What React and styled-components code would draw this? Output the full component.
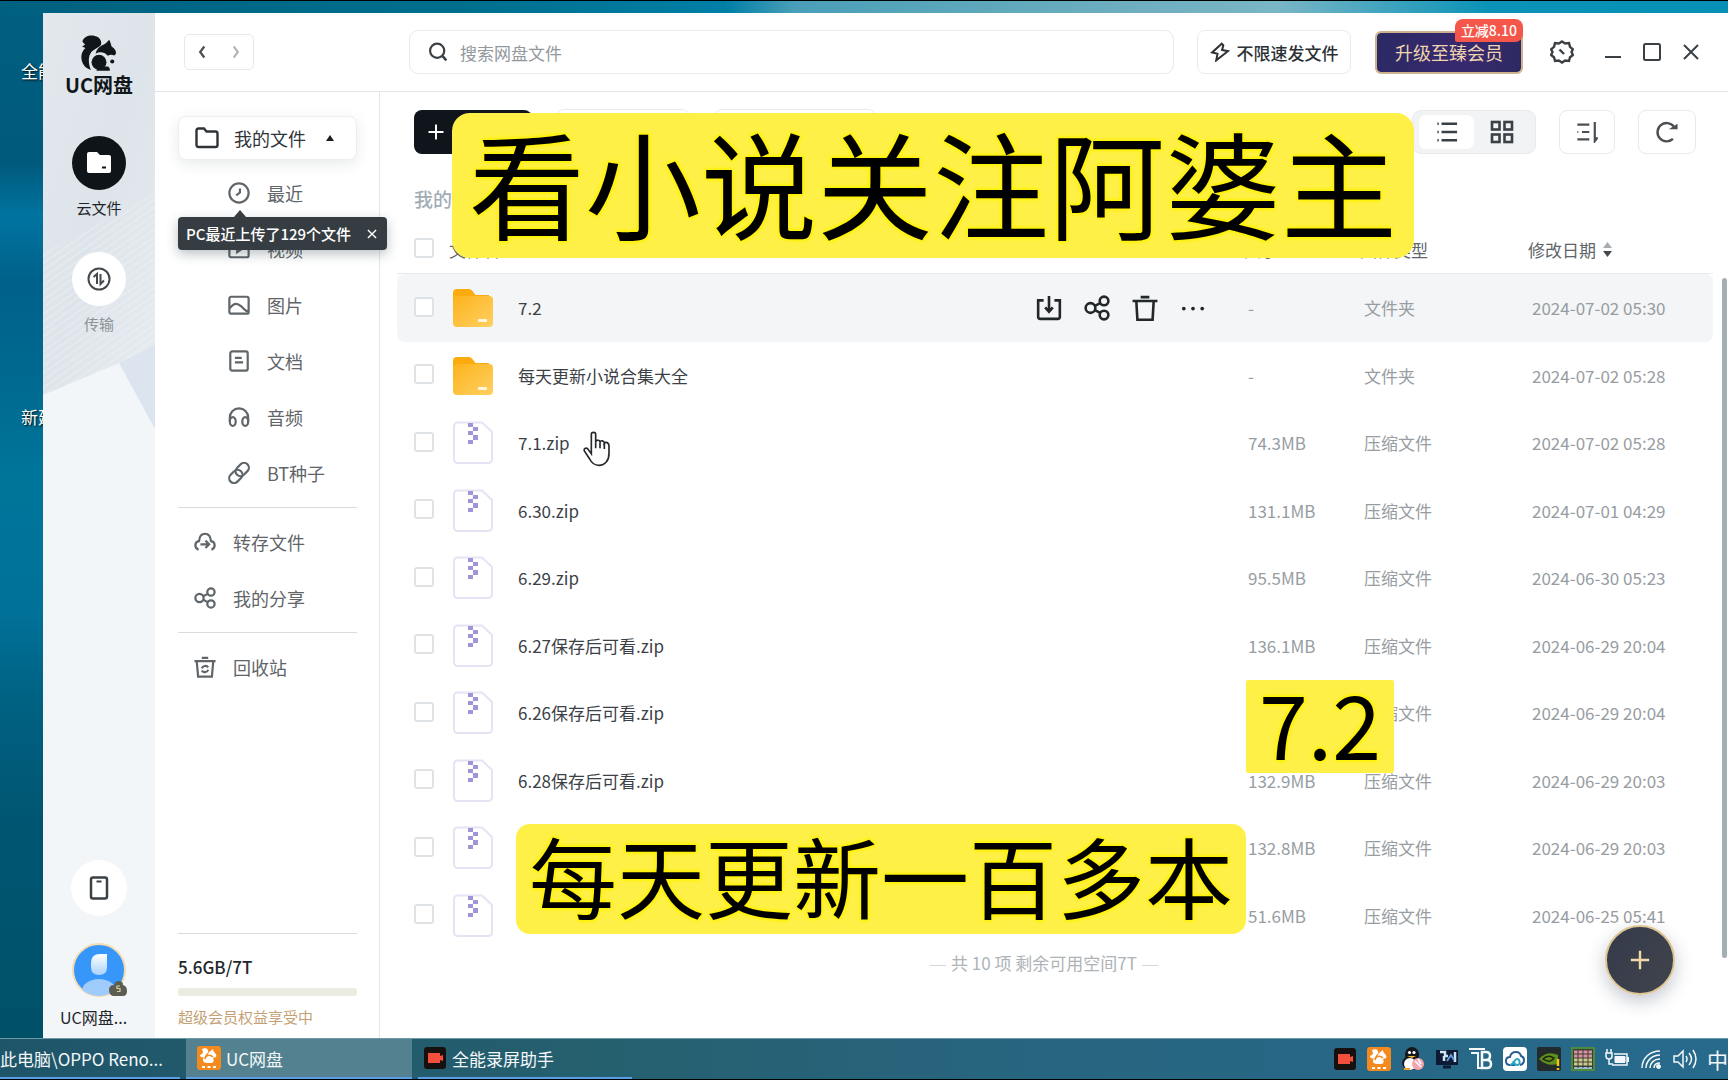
import { useState } from "react";
import styled, { createGlobalStyle, css } from "styled-components";

const GlobalStyle = createGlobalStyle`
  * {
    box-sizing: border-box;
  }

  body {
    margin: 0;
    font-family: "Noto Sans CJK SC", "Noto Sans", sans-serif;
    font-size: 17px;
    color: #3b4045;
  }

  button, input {
    font: inherit;
    color: inherit;
  }

  button {
    background: none;
    border: none;
    padding: 0;
    cursor: pointer;
  }

  svg {
    display: block;
    flex: none;
  }
`;

const Desktop = styled.div`
  position: relative;
  display: flex;
  flex-direction: column;
  height: 100vh;
  overflow: hidden;
  border-top: 1px solid #000;
  border-bottom: 1px solid #000;
  background:
    linear-gradient(90deg, #00607f 0, #00708f 28%, #007fa6 42%, #4a9fb8 46%, #6fafbf 66%, #79b6c6 74%, #0b93b7 86%, #0690b5 100%)
    0 0 / 100% 14px no-repeat,
    linear-gradient(180deg, #005f80 0, #005a7c 15%, #0074a0 20%, #00618a 26%, #006a90 36%, #00759a 44%, #00729a 56%, #006080 66%, #005672 76%, #004f66 100%);
`;

const DesktopLabel = styled.span`
  position: absolute;
  left: 21px;
  top: ${(p) => p.$top}px;
  color: #fff;
  line-height: 24px;
  white-space: nowrap;
  text-shadow: 1px 1px 2px #000;
`;

const Window = styled.div`
  position: relative;
  display: flex;
  flex: 1;
  min-height: 0;
  margin: 12px 0 0 43px;
  background: #fff;
`;

/* ---- left rail ---- */

const Rail = styled.nav`
  position: relative;
  display: flex;
  flex-direction: column;
  align-items: center;
  flex: none;
  width: 112px;
  padding: 22px 0 11px;
  background: #f2f6f9;
`;

const RailArt = styled.svg`
  position: absolute;
  inset: 0 0 auto;
  width: 100%;
`;

const Brand = styled.div`
  position: relative;
  margin-bottom: 38px;
  font-size: 20px;
  font-weight: 700;
  line-height: 27px;
  color: #10161a;
`;

const Logo = styled.svg`
  position: relative;
  width: 36px;
  height: 36px;
  fill: #10161a;
`;

const RailButton = styled.button`
  position: relative;
  display: flex;
  flex-direction: column;
  align-items: center;
  gap: 8px;
  margin-bottom: 34px;
  font-size: 15px;
  line-height: 20px;
  color: ${(p) => (p.$active ? "#1f2428" : "#8b9298")};
`;

const Round = styled.span`
  display: grid;
  place-items: center;
  width: 54px;
  height: 54px;
  border-radius: 50%;
  color: ${(p) => (p.$active ? "#fff" : "#44494d")};
  background: ${(p) => (p.$active ? "#0e1418" : "#fff")};
`;

const PhoneButton = styled.button`
  display: grid;
  place-items: center;
  width: 56px;
  height: 56px;
  margin: auto 0 26px;
  border-radius: 50%;
  background: #fff;
`;

const Account = styled.button`
  display: flex;
  flex-direction: column;
  align-items: center;
  gap: 9px;
  font-size: 16px;
  line-height: 20px;
  color: #1f2428;
`;

const AccountName = styled.span`
  width: 78px;
  text-align: left;
  white-space: nowrap;
`;

/* ---- header ---- */

const Body = styled.div`
  display: flex;
  flex-direction: column;
  flex: 1;
  min-width: 0;
`;

const Header = styled.header`
  display: flex;
  align-items: center;
  flex: none;
  height: 79px;
  padding: 0 25px 0 29px;
  border-bottom: 1px solid #e4e7e9;
`;

const History = styled.div`
  display: flex;
  flex: none;
  width: 70px;
  height: 36px;
  margin-right: 155px;
  border: 1px solid #e6e8ea;
  border-radius: 5px;

  button {
    display: grid;
    place-items: center;
    flex: 1;
    color: #4a4f53;
  }

  button:disabled {
    color: #b4b8bb;
  }
`;

const SearchBox = styled.label`
  display: flex;
  align-items: center;
  gap: 12px;
  flex: 1;
  height: 44px;
  padding: 0 18px;
  border: 1px solid #e8eaec;
  border-radius: 9px;

  input {
    flex: 1;
    min-width: 0;
    padding: 0;
    border: none;
    outline: none;
    background: none;
  }

  input::placeholder {
    color: #92989d;
  }
`;

const FastButton = styled.button`
  display: flex;
  align-items: center;
  justify-content: center;
  gap: 7px;
  flex: none;
  width: 154px;
  height: 44px;
  margin: 0 24px 0 23px;
  border: 1px solid #e8eaec;
  border-radius: 8px;
  font-weight: 500;
  color: #2c3135;
`;

const Upgrade = styled.button`
  position: relative;
  flex: none;
  width: 148px;
  height: 43px;
  margin-right: 27px;
  border: 2px solid #cdb28c;
  border-radius: 6px;
  background: linear-gradient(100deg, #2b2a63, #38296f 60%, #2c2a62) padding-box;
  font-size: 18px;
  color: #f0d6ae;
`;

const Discount = styled.span`
  position: absolute;
  right: -2px;
  top: -14px;
  padding: 0 6px;
  border-radius: 8px 8px 8px 2px;
  background: #f4574a;
  font-size: 14px;
  font-weight: 500;
  line-height: 23px;
  color: #fff;
`;

const WindowControls = styled.div`
  display: flex;
  gap: 15px;
  margin-left: 27px;
`;

/* ---- folder menu ---- */

const Columns = styled.div`
  display: flex;
  flex: 1;
  min-height: 0;
`;

const Side = styled.aside`
  display: flex;
  flex-direction: column;
  flex: none;
  width: 225px;
  padding: 24px 22px 9px 23px;
  border-right: 1px solid #e4e7e9;
`;

const SideRoot = styled.button`
  display: flex;
  align-items: center;
  gap: 15px;
  height: 44px;
  flex: none;
  margin-bottom: 5px;
  padding: 0 16px;
  border: 1px solid #eceeef;
  border-radius: 8px;
  background: #fff;
  box-shadow: 0 4px 14px rgba(30, 50, 60, 0.1);
  font-size: 18px;
  color: #2f3438;
`;

const Caret = styled.i`
  margin-left: 5px;
  border: 4px solid transparent;
  border-top: none;
  border-bottom: 6px solid #1a1e21;
`;

const SideItem = styled.button`
  position: relative;
  display: flex;
  align-items: center;
  gap: 17px;
  flex: none;
  height: 56px;
  padding-left: ${(p) => (p.$nested ? 50 : 16)}px;
  font-size: 18px;
  color: #5f6569;
`;

const Rule = styled.hr`
  flex: none;
  width: 100%;
  height: 1px;
  margin: 6px 0;
  border: none;
  background: #d9dcde;
`;

const Anchor = styled.div`
  position: relative;
  z-index: 2;
`;

const Tip = styled.div`
  position: absolute;
  left: 0;
  top: -4px;
  display: flex;
  align-items: center;
  gap: 14px;
  height: 33px;
  padding: 0 8px;
  border-radius: 4px;
  background: #363d42;
  box-shadow: 0 4px 12px rgba(30, 50, 60, 0.3);
  font-size: 15px;
  font-weight: 500;
  white-space: nowrap;
  color: #fff;

  &::before {
    content: "";
    position: absolute;
    left: 56px;
    top: -7px;
    border: 6px solid transparent;
    border-top: none;
    border-bottom: 7px solid #363d42;
  }
`;

const Quota = styled.div`
  margin-top: auto;
  font-size: 15px;
  line-height: 24px;
  color: #c3a174;

  strong {
    display: block;
    margin-top: 21px;
    font-size: 17px;
    font-weight: 500;
    color: #22272b;
  }

  ${Rule} {
    margin: 0;
  }
`;

const QuotaBar = styled.div`
  height: 8px;
  margin: 9px 0;
  border-radius: 3px;
  background: #ecebe1;
`;

/* ---- file list ---- */

const Main = styled.main`
  position: relative;
  flex: 1;
  min-width: 0;
  padding: 18px 15px 0 17px;
`;

const Toolbar = styled.div`
  display: flex;
  align-items: center;
  height: 44px;
  padding: 0 17px;
`;

const Button = styled.button`
  height: 46px;
  flex: none;
  width: ${(p) => p.$width}px;
  margin-left: 24px;
  border: 1px solid #e8eaec;
  border-radius: 8px;
  background: #fff;
`;

const NewButton = styled(Button)`
  display: flex;
  align-items: center;
  height: 44px;
  margin: 0;
  padding-left: 13px;
  border: none;
  background: #0f151a;
  color: #fff;
`;

const IconButton = styled(Button)`
  display: grid;
  place-items: center;
  height: 44px;
  margin-left: 23px;
  color: #4a4f53;
`;

const ViewSwitch = styled.div`
  display: flex;
  height: 44px;
  width: 124px;
  margin-left: auto;
  padding: 4px 6px;
  border: 1px solid #e8eaec;
  border-radius: 9px;
  background: #f1f3f4;

  button {
    display: grid;
    place-items: center;
    flex: 1;
    border-radius: 7px;
  }

  button[aria-pressed="true"] {
    background: #fff;
  }
`;

const Breadcrumb = styled.div`
  padding: 31px 17px 15px;
  font-size: 19px;
  font-weight: 500;
  line-height: 28px;
  color: #a3adb6;
`;

const FileTable = styled.table`
  width: 100%;
  table-layout: fixed;
  border-collapse: separate;
  border-spacing: 0;
  line-height: 24px;

  th, td {
    padding: 0;
    text-align: left;
    vertical-align: middle;
    font-weight: 400;
    white-space: nowrap;
  }

  th {
    height: 46px;
    padding-bottom: 2px;
    border-bottom: 1px solid #e6e9eb;
    color: #5f666b;
  }

  td {
    color: #979da2;
  }
`;

const Col = styled.col`
  width: ${(p) => p.$width}px;
`;

const Row = styled.tr`
  height: 68px;

  &:nth-child(even) {
    height: 67px;
  }

  ${(p) =>
    p.$hover &&
    css`
      td {
        background: #f3f5f6;
      }

      td:first-child {
        border-radius: 8px 0 0 8px;
      }

      td:last-child {
        border-radius: 0 8px 8px 0;
      }
    `}
`;

const Check = styled.input.attrs({ type: "checkbox" })`
  appearance: none;
  display: block;
  width: 20px;
  height: 20px;
  margin: 0 0 3px 17px;
  border: 2px solid #e0e3e5;
  border-radius: 3px;
  background: #fff;

  &:checked {
    background: #0f151a;
  }
`;

const NameCell = styled.div`
  display: flex;
  align-items: center;
  gap: 25px;
  color: #3b4146;
`;

const Actions = styled.div`
  display: flex;
  gap: 22px;
  margin-left: auto;
  padding-right: 42px;
  color: #22272a;
`;

const SortHeader = styled.button`
  display: flex;
  align-items: center;
  gap: 7px;
`;

const HeadText = styled.div`
  margin-left: -4px;
`;

const Summary = styled.p`
  margin: 1px 0 0;
  padding-right: 22px;
  text-align: center;
  line-height: 26px;
  color: #adb3b7;

  &::before,
  &::after {
    content: "";
    display: inline-block;
    width: 16px;
    height: 1px;
    margin: 0 5px;
    vertical-align: middle;
    background: #d3d7d9;
  }
`;

const Scrollbar = styled.div`
  position: absolute;
  right: 1px;
  top: 186px;
  bottom: 80px;
  width: 5px;
  border-radius: 3px;
  background: #a5afb6;
`;

const Fab = styled.button`
  position: absolute;
  right: 53px;
  bottom: 43px;
  display: grid;
  place-items: center;
  width: 70px;
  height: 70px;
  border: 2px solid #dcc593;
  border-radius: 50%;
  background: linear-gradient(120deg, #343a4a, #40444d);
  box-shadow: 0 6px 18px rgba(40, 50, 80, 0.28);
  color: #f3d9a8;
`;

/* ---- taskbar ---- */

const Taskbar = styled.footer`
  display: flex;
  align-items: stretch;
  flex: none;
  height: 41px;
  gap: 6px;
  border-top: 1px solid #6c9aa6;
  background: linear-gradient(90deg, #1f5569, #25606f 35%, #286580 60%, #276a8c);
`;

const Task = styled.button`
  display: flex;
  align-items: center;
  gap: 5px;
  width: ${(p) => p.$width}px;
  padding-left: ${(p) => p.$inset}px;
  border-bottom: 2px solid #5b9ee6;
  background: ${(p) => (p.$active ? "#53818f" : "none")};
  white-space: nowrap;
  color: #f4f8fa;
`;

const Tray = styled.div`
  display: flex;
  align-items: center;
  gap: 10px;
  margin-left: auto;
  color: #f4f8fa;
`;

const InputMethod = styled.button`
  width: 21px;
  font-size: 21px;
  line-height: 30px;
`;

/* ---- captions over the recording ---- */

const Caption = styled.div`
  position: absolute;
  left: ${(p) => p.$left}px;
  top: ${(p) => p.$top}px;
  z-index: 3;
  padding: 0 ${(p) => p.$pad}px 10px;
  border-radius: ${(p) => p.$radius}px;
  background: #fff048;
  font-size: ${(p) => p.$size}px;
  line-height: ${(p) => p.$line}px;
  white-space: nowrap;
  color: #000;
  text-shadow: 0 0 3px #fff200, 0 0 3px #fff200, 0 0 4px #fff200, 0 0 5px #fff200;
`;

const Pointer = styled.svg`
  position: absolute;
  left: 583px;
  top: 430px;
  z-index: 2;
`;

const PATHS = {
  back: <path d="M14.5 6 10 12l4.5 6" strokeWidth="2.4" />,
  forward: <path d="m9.5 6 4.5 6-4.5 6" strokeWidth="2.4" />,
  search: (
    <>
      <circle cx="11" cy="10.5" r="8.5" />
      <path d="m17.5 17 4.5 5" strokeWidth="3" />
    </>
  ),
  bolt: <path d="M14 2 2.500 12.500l6.500 1.500-1.500 8L21.500 11l-7-1.500L16 4z" />,
  gear: (
    <>
      <path d="m12 1.500 3.200 2 3.800-.4 1 3.700 2.900 2.500L21.500 12l1.400 3-2.900 2.300-1 3.700-3.800-.4-3.200 2-3.200-2-3.800.4-1-3.700L1.100 15l1.400-3-1.400-2.700L4 6.800l1-3.700 3.800.4z" />
      <path d="m9.500 9.500 4.500 4.500" />
    </>
  ),
  minimize: <path d="M4 17h16" />,
  maximize: <rect x="4" y="4" width="16" height="16" rx="1.500" />,
  close: <path d="m5 5 14 14M19 5 5 19" />,
  folder: <path d="M1.500 19V4.500Q1.500 2.500 3.500 2.500H9l2.500 3h9q2 0 2 2V19q0 2-2 2h-17q-2 0-2-2z" />,
  clock: (
    <>
      <circle cx="12" cy="12" r="10.500" />
      <path d="M13 7v4.500L9 14.500" />
    </>
  ),
  video: (
    <>
      <rect x="1.500" y="3" width="21" height="18" rx="2" />
      <path d="m10 8.500 5 3.500-5 3.500z" />
    </>
  ),
  image: (
    <>
      <rect x="1.500" y="3" width="21" height="18.500" rx="2" />
      <path d="M2 15.500c5-7 9-5 12.500-2 3 2.500 3.500 5 7.500 5.500" />
    </>
  ),
  doc: (
    <>
      <rect x="2.500" y="1.500" width="19" height="21" rx="2" />
      <path d="M7.500 8.500h7.500M7.500 13.500h9" />
    </>
  ),
  audio: (
    <>
      <path d="M2 17v-4.500a10 10 0 0 1 20 0V17" />
      <ellipse cx="5.200" cy="17" rx="3.200" ry="4.800" />
      <ellipse cx="18.800" cy="17" rx="3.200" ry="4.800" />
    </>
  ),
  link: (
    <>
      <rect x="7.500" y="3" width="16" height="10.500" rx="5.200" transform="rotate(-45 15.500 8.200)" />
      <rect x="0.500" y="10.500" width="16" height="10.500" rx="5.200" transform="rotate(-45 8.500 15.700)" />
    </>
  ),
  cloud: (
    <>
      <path d="M5 20.500c-5-2-4.500-9 .5-9.500C6 5.500 9 3 12 3s6 2.500 6.500 8c5 .5 5.500 7.500.5 9.500" />
      <path d="M7 14.500h9M12.500 10.500l4 4-4 4" />
    </>
  ),
  share: (
    <>
      <circle cx="6" cy="12" r="4.500" />
      <circle cx="18.500" cy="5.500" r="4" />
      <circle cx="18.500" cy="18.500" r="4" />
      <path d="m10 10 5-2.500M10 14l5 2.500" />
    </>
  ),
  recycle: (
    <>
      <path d="M.5 5.500h23M8.500 2h7M3 6l1.500 16.500h15L21 6" />
      <path d="M15.500 12.500a4 4 0 0 0-7 1M8.500 16a4 4 0 0 0 7-1" />
    </>
  ),
  trash: <path d="M.5 5.500h23M8 2h8M4 6l1 17h14l1-17" />,
  save: <path d="M7 5H2v15q0 2 2 2h16q2 0 2-2V5h-5M12 1v14M8.500 11.500 12 15.500l3.500-4" />,
  more: (
    <g fill="currentColor" stroke="none">
      <circle cx="3.500" cy="12.500" r="1.700" />
      <circle cx="12" cy="12.500" r="1.700" />
      <circle cx="20.500" cy="12.500" r="1.700" />
    </g>
  ),
  phone: (
    <>
      <rect x="4" y="1.500" width="16" height="21" rx="2" strokeWidth="2.500" />
      <path d="M9.500 5.500h5" />
    </>
  ),
  transfer: (
    <>
      <circle cx="12" cy="12" r="10.500" />
      <path d="M6.500 10 10 7v10M13.500 7v10l3.500-3.500" />
    </>
  ),
  plus: <path d="M12 2v20M2 12h20" />,
  list: <path d="M1.500 3h1.500M1.500 12h1.500M1.500 21h1.500M6 3h17M6 12h17M6 21h17" strokeWidth="2.800" />,
  grid: (
    <>
      <rect x="2" y="2" width="7.500" height="7.500" />
      <rect x="14.500" y="2" width="7.500" height="7.500" />
      <rect x="2" y="14.500" width="7.500" height="7.500" />
      <rect x="14.500" y="14.500" width="7.500" height="7.500" />
    </>
  ),
  sort: <path d="M1.500 4h13M1.500 12h1M6.500 12h8M1.500 20h13M20.500 1v21l3-4" />,
  refresh: (
    <>
      <path d="M19.500 6A10 10 0 1 0 18.500 19.500" />
      <path d="M14 9h9.500V3z" fill="currentColor" stroke="none" />
    </>
  ),
};

function Icon({ name, size = 22, weight = 2.4 }) {
  return (
    <svg
      width={size}
      height={size}
      viewBox="0 0 24 24"
      fill="none"
      stroke="currentColor"
      strokeWidth={weight}
      aria-hidden="true"
    >
      {PATHS[name]}
    </svg>
  );
}

function FolderIcon() {
  return (
    <svg width="40" height="40" viewBox="0 0 40 40" aria-hidden="true">
      <defs>
        <linearGradient id="folder" x1="0" y1="0" x2="1" y2="1">
          <stop offset="0" stopColor="#fdb31c" />
          <stop offset="1" stopColor="#ffd062" />
        </linearGradient>
      </defs>
      <path d="M0 14V5q0-4 4-4h12q2 0 3 1.500L22.500 7H36v8z" fill="#fbac0c" />
      <path d="M0 12q0-4 4-4h32q4 0 4 4v23q0 4-4 4H4q-4 0-4-4z" fill="url(#folder)" />
      <rect x="25" y="31" width="9" height="3" rx="1" fill="#fff6dc" />
    </svg>
  );
}

function ZipIcon() {
  return (
    <svg width="40" height="44" viewBox="0 0 40 44" aria-hidden="true">
      <path
        d="M5 1.500h24l10 9.500v27q0 4-4 4H5q-4 0-4-4v-32.500q0-4 4-4z"
        fill="#fff"
        stroke="#e6e3f4"
        strokeWidth="2"
      />
      <g fill="#a094da">
        <rect x="15" y="2" width="5" height="4" />
        <rect x="20" y="6" width="5" height="4" />
        <rect x="15" y="10" width="5" height="4" />
        <rect x="20" y="14" width="5" height="5" />
        <rect x="15" y="19" width="5" height="4" />
      </g>
    </svg>
  );
}

function Avatar() {
  return (
    <svg width="56" height="56" viewBox="0 0 56 56" aria-hidden="true">
      <defs>
        <linearGradient id="person" x1="0" y1="0" x2="0" y2="1">
          <stop offset="0" stopColor="#fff" />
          <stop offset="1" stopColor="#a9d2fd" />
        </linearGradient>
        <clipPath id="disc">
          <circle cx="28" cy="28" r="26" />
        </clipPath>
      </defs>
      <circle cx="28" cy="28" r="26" fill="#3696f9" stroke="#f6ddb0" strokeWidth="2" />
      <path d="M20 21q0-9 9-9h7v13q0 8-8 8t-8-8z" fill="url(#person)" />
      <ellipse cx="28" cy="49" rx="17" ry="12" fill="#9fcbfc" clipPath="url(#disc)" />
      <path d="M42 54q-4-1-4-6t5-5q1-4 5-4t4 4q4 1 4 6t-4 5z" fill="#5c5d51" />
      <path d="M49 44h-3v2.500h3v3h-3" fill="none" stroke="#d9cda6" strokeWidth="1.200" />
    </svg>
  );
}

function SquirrelBadge() {
  return (
    <svg width="24" height="24" viewBox="0 0 24 24" aria-hidden="true">
      <rect width="24" height="24" rx="3" fill="#f48a1d" />
      <path
        d="M5 3c4-2 7 0 6 4 2-1 3-3 5-4 0 2 1 3 2 4 1 1 2 3 1 4l-3 1c1 2 1 4-1 5h-5c-4 0-5-3-3-6-2 1-4 0-4-2 1-1 3-1 3-3z"
        fill="#fff"
      />
      <path d="M8 13c1-4 5-5 8-2M11 7c-1 2-3 3-3 6" fill="none" stroke="#f48a1d" strokeWidth="1.400" />
      <path d="M5 21h3M10.500 21h3M16 21h3" stroke="#fff" strokeWidth="2" />
    </svg>
  );
}

function RecorderBadge() {
  return (
    <svg width="24" height="24" viewBox="0 0 24 24" aria-hidden="true">
      <rect x="1" y="1" width="22" height="22" rx="3" fill="#16110f" />
      <path d="M5 7h12v3l3-1v6l-3-1v3H5z" fill="#f2503c" />
    </svg>
  );
}

function TrayIcons() {
  return (
    <>
      <RecorderBadge />
      <SquirrelBadge />
      <svg width="24" height="24" viewBox="0 0 24 24" aria-hidden="true">
        <ellipse cx="11" cy="8" rx="7" ry="8" fill="#15181b" />
        <ellipse cx="10" cy="16" rx="9" ry="7" fill="#15181b" />
        <ellipse cx="9" cy="17" rx="6" ry="6" fill="#fff" />
        <circle cx="8.500" cy="5.500" r="1.600" fill="#fff" />
        <circle cx="13" cy="5.500" r="1.600" fill="#fff" />
        <path d="M6 9h9l-4 2z" fill="#f6b52c" />
        <circle cx="17" cy="17" r="6" fill="#f5a3ad" />
        <path d="m14 14 6 6M17 12l3 5" stroke="#fff" strokeWidth="1.500" />
        <path d="M3 22h6" stroke="#f6a02c" strokeWidth="2" />
      </svg>
      <svg width="24" height="24" viewBox="0 0 24 24" aria-hidden="true">
        <rect x="1" y="3" width="22" height="15" fill="#0c1a33" />
        <path d="M5 5h5v4h3M9 9v5M20 5v10" fill="none" stroke="#cfe3f7" strokeWidth="2.500" />
        <path d="m12 14 4-6 3 5" fill="none" stroke="#5e9ad6" strokeWidth="2" />
        <path d="M8 20h8" stroke="#0c1a33" strokeWidth="3" />
      </svg>
      <svg width="24" height="24" viewBox="0 0 24 24" fill="none" stroke="#f4f8fa" aria-hidden="true">
        <path d="M0 2h16M2 6h7v15h5" strokeWidth="2" />
        <path d="M13 5v16h5q4 0 4-4t-4-4h-5 4q4 0 4-4t-4-4z" strokeWidth="2.500" />
      </svg>
      <svg width="24" height="24" viewBox="0 0 24 24" aria-hidden="true">
        <rect width="24" height="24" rx="4" fill="#fff" />
        <path d="M12 18H7q-4 0-4-4t4-4q1-5 6-5 4 0 5 4 3 1 3 4 0 4-4 5" fill="none" stroke="#2b5d96" strokeWidth="2" />
        <path d="M7 18c4 0 4-6 7-6s4 6 0 6c-2 0-3-2-4-4" fill="none" stroke="#2aa7b8" strokeWidth="2" />
      </svg>
      <svg width="24" height="24" viewBox="0 0 24 24" aria-hidden="true">
        <rect width="24" height="24" rx="2" fill="#232a2b" />
        <path d="M2 12q8-9 19-4v9Q10 20 2 12z" fill="#5f8f1d" />
        <path d="M6 12q5-5 11-1-4 6-11 1z" fill="none" stroke="#1c2410" strokeWidth="1.500" />
        <path d="M21 12v7M21 21v2" stroke="#f3c11c" strokeWidth="2.500" />
      </svg>
      <svg width="24" height="24" viewBox="0 0 24 24" aria-hidden="true">
        <rect x="1" y="1" width="22" height="22" fill="#3a3f3a" stroke="#4f8a3a" strokeWidth="2" />
        <path d="M3 5h18M3 9h18" stroke="#d9929b" strokeWidth="3" />
        <path d="M3 13h18M3 17h18" stroke="#cfc98a" strokeWidth="3" />
        <path d="M3 21h18" stroke="#9cbccd" strokeWidth="2" />
        <path d="M7 3v18M12 3v18M17 3v18" stroke="#3a3f3a" />
      </svg>
      <svg width="24" height="24" viewBox="0 0 24 24" fill="none" stroke="currentColor" aria-hidden="true">
        <path d="M2 2v4M6 2v4M1 6h6v3q0 3-3 3t-3-3zM4 12v5h4" strokeWidth="1.500" />
        <path d="M9 7h13v11H7" strokeWidth="1.500" />
        <path d="M10 9.500h10v6H10z" fill="currentColor" />
        <path d="M23 10v5" strokeWidth="2" />
      </svg>
      <svg width="24" height="24" viewBox="0 0 24 24" fill="none" stroke="currentColor" aria-hidden="true">
        <path d="M3 21C3 11 11 4 21 4M7 21c0-7 6-13 14-13M11 21c0-5 4-9 10-9M15 21c0-3 2-5 6-5" strokeWidth="1.500" />
        <circle cx="19.500" cy="19.500" r="2" fill="currentColor" />
      </svg>
      <svg width="24" height="24" viewBox="0 0 24 24" fill="none" stroke="currentColor" strokeWidth="1.500" aria-hidden="true">
        <path d="M1 9h4l5-5v16l-5-5H1zM13 9q2 3 0 6M16 6q5 6 0 12M20 3q6 9 0 18" />
      </svg>
    </>
  );
}

const MENU = [
  { icon: "clock", label: "最近" },
  { icon: "video", label: "视频" },
  { icon: "image", label: "图片" },
  { icon: "doc", label: "文档" },
  { icon: "audio", label: "音频" },
  { icon: "link", label: "BT种子" },
];

const FILES = [
  { name: "7.2", folder: true, size: "-", date: "2024-07-02 05:30" },
  { name: "每天更新小说合集大全", folder: true, size: "-", date: "2024-07-02 05:28" },
  { name: "7.1.zip", size: "74.3MB", date: "2024-07-02 05:28" },
  { name: "6.30.zip", size: "131.1MB", date: "2024-07-01 04:29" },
  { name: "6.29.zip", size: "95.5MB", date: "2024-06-30 05:23" },
  { name: "6.27保存后可看.zip", size: "136.1MB", date: "2024-06-29 20:04" },
  { name: "6.26保存后可看.zip", size: "", date: "2024-06-29 20:04" },
  { name: "6.28保存后可看.zip", size: "132.9MB", date: "2024-06-29 20:03" },
  { name: "", size: "132.8MB", date: "2024-06-29 20:03" },
  { name: "", size: "51.6MB", date: "2024-06-25 05:41" },
];

const ACTIONS = [
  { icon: "save", label: "下载" },
  { icon: "share", label: "分享" },
  { icon: "trash", label: "删除" },
  { icon: "more", label: "更多" },
];

function LeftRail() {
  return (
    <Rail>
      <RailArt viewBox="0 0 112 416" aria-hidden="true">
        <defs>
          <linearGradient id="rail" x1="0" y1="0" x2="1" y2="1">
            <stop offset="0" stopColor="#e3e8ed" />
            <stop offset="0.500" stopColor="#dde4ea" />
            <stop offset="1" stopColor="#e6ebf1" />
          </linearGradient>
          <pattern id="lines" width="6" height="6" patternUnits="userSpaceOnUse" patternTransform="rotate(-35)">
            <path d="M0 1h6" stroke="#fff" strokeOpacity="0.350" />
          </pattern>
        </defs>
        <path d="M0 0h112v332L76 350 0 382z" fill="url(#rail)" />
        <path d="M0 240 112 180v152L76 350 0 382z" fill="url(#lines)" />
        <path d="M76 350 112 332v84z" fill="#dbe4ef" />
      </RailArt>
      <Logo viewBox="245 105 106 106" aria-hidden="true">
        <path d="M249 124c5-14 18-19 34-17 14 2 24 12 21 26-3 8-20 12-29 23-9 13-9 31-1 52-18-5-28-20-28-38 0-12 5-20 12-27l-10-4 9-5z" />
        <path d="M306 136c9-3 16-10 22-17 4 7 5 13 7 20 9 5 14 13 13 21l-5 5c-8-3-14-2-19 1-10-11-24-13-36-6 2-11 9-19 18-24z" />
        <circle cx="298" cy="185" r="22" />
        <path d="M298 198h27q6 5 5 12h-40z" />
        <circle cx="337" cy="183" r="6" />
      </Logo>
      <Brand>UC网盘</Brand>
      <RailButton $active>
        <Round $active>
          <svg width="24" height="22" viewBox="0 0 24 22" aria-hidden="true">
            <path d="M0 2q0-2 2-2h8l3 3h9q2 0 2 2v14q0 2-2 2H2q-2 0-2-2z" fill="#fff" />
            <path d="M15 15.500h4" stroke="#0e1418" strokeWidth="2" />
          </svg>
        </Round>
        云文件
      </RailButton>
      <RailButton>
        <Round>
          <Icon name="transfer" size={24} weight={2} />
        </Round>
        传输
      </RailButton>
      <PhoneButton aria-label="手机">
        <Icon name="phone" size={24} weight={2} />
      </PhoneButton>
      <Account>
        <Avatar />
        <AccountName>UC网盘...</AccountName>
      </Account>
    </Rail>
  );
}

function SideMenu() {
  const [tipOpen, setTipOpen] = useState(true);

  return (
    <Side>
      <SideRoot>
        <Icon name="folder" size={24} />
        我的文件
        <Caret />
      </SideRoot>
      {MENU.slice(0, 1).map((item) => (
        <SideItem key={item.label} $nested>
          <Icon name={item.icon} />
          {item.label}
        </SideItem>
      ))}
      <Anchor>
        {tipOpen && (
          <Tip role="status">
            PC最近上传了129个文件
            <button aria-label="关闭提示" onClick={() => setTipOpen(false)}>
              <Icon name="close" size={14} />
            </button>
          </Tip>
        )}
      </Anchor>
      {MENU.slice(1).map((item) => (
        <SideItem key={item.label} $nested>
          <Icon name={item.icon} />
          {item.label}
        </SideItem>
      ))}
      <Rule />
      <SideItem>
        <Icon name="cloud" />
        转存文件
      </SideItem>
      <SideItem>
        <Icon name="share" />
        我的分享
      </SideItem>
      <Rule />
      <SideItem>
        <Icon name="recycle" />
        回收站
      </SideItem>
      <Quota>
        <Rule />
        <strong>5.6GB/7T</strong>
        <QuotaBar />
        超级会员权益享受中
      </Quota>
    </Side>
  );
}

function FileRow({ file, hover }) {
  return (
    <Row $hover={hover}>
      <td>
        <Check aria-label={`选择 ${file.name}`} />
      </td>
      <td>
        <NameCell>
          {file.folder ? <FolderIcon /> : <ZipIcon />}
          {file.name}
          {hover && (
            <Actions>
              {ACTIONS.map((action) => (
                <button key={action.icon} aria-label={action.label}>
                  <Icon name={action.icon} size={26} />
                </button>
              ))}
            </Actions>
          )}
        </NameCell>
      </td>
      <td>{file.size}</td>
      <td>{file.folder ? "文件夹" : "压缩文件"}</td>
      <td>{file.date}</td>
    </Row>
  );
}

function FileList() {
  const [view, setView] = useState("list");

  return (
    <Main>
      <Toolbar>
        <NewButton $width={118} aria-label="上传">
          <Icon name="plus" size={18} weight={2.6} />
        </NewButton>
        <Button $width={134} aria-label="新建文件夹" />
        <Button $width={162} aria-label="云添加" />
        <ViewSwitch>
          <button aria-label="列表" aria-pressed={view === "list"} onClick={() => setView("list")}>
            <Icon name="list" size={22} />
          </button>
          <button aria-label="网格" aria-pressed={view === "grid"} onClick={() => setView("grid")}>
            <Icon name="grid" size={24} weight={2.6} />
          </button>
        </ViewSwitch>
        <IconButton $width={56} aria-label="排序">
          <Icon name="sort" size={22} />
        </IconButton>
        <IconButton $width={58} aria-label="刷新">
          <Icon name="refresh" size={22} weight={2.6} />
        </IconButton>
      </Toolbar>
      <Breadcrumb>我的文件</Breadcrumb>
      <FileTable>
        <colgroup>
          <Col $width={56} />
          <col />
          <Col $width={116} />
          <Col $width={168} />
          <Col $width={181} />
        </colgroup>
        <thead>
          <tr>
            <th>
              <Check aria-label="全选" />
            </th>
            <th>
              <HeadText>文件名</HeadText>
            </th>
            <th>
              <HeadText>大小</HeadText>
            </th>
            <th>
              <HeadText>文件类型</HeadText>
            </th>
            <th>
              <HeadText>
                <SortHeader>
                  修改日期
                  <svg width="9" height="16" viewBox="0 0 9 16" aria-hidden="true">
                    <path d="M0 6 4.500 0 9 6z" fill="#a7acb0" />
                    <path d="M0 9h9l-4.500 6z" fill="#44494d" />
                  </svg>
                </SortHeader>
              </HeadText>
            </th>
          </tr>
        </thead>
        <tbody>
          {FILES.map((file, index) => (
            <FileRow key={index} file={file} hover={index === 0} />
          ))}
        </tbody>
      </FileTable>
      <Summary>共 10 项 剩余可用空间7T</Summary>
      <Scrollbar />
      <Fab aria-label="添加">
        <Icon name="plus" size={22} weight={2.6} />
      </Fab>
    </Main>
  );
}

function TopBar() {
  return (
    <Header>
      <History>
        <button aria-label="后退">
          <Icon name="back" />
        </button>
        <button aria-label="前进" disabled>
          <Icon name="forward" />
        </button>
      </History>
      <SearchBox>
        <Icon name="search" size={20} weight={2.6} />
        <input type="text" placeholder="搜索网盘文件" aria-label="搜索网盘文件" />
      </SearchBox>
      <FastButton>
        <Icon name="bolt" size={20} weight={2.4} />
        不限速发文件
      </FastButton>
      <Upgrade>
        升级至臻会员
        <Discount>立减8.10</Discount>
      </Upgrade>
      <button aria-label="设置">
        <Icon name="gear" size={24} />
      </button>
      <WindowControls>
        <button aria-label="最小化">
          <Icon name="minimize" size={24} weight={2} />
        </button>
        <button aria-label="最大化">
          <Icon name="maximize" size={24} weight={2} />
        </button>
        <button aria-label="关闭">
          <Icon name="close" size={24} weight={2} />
        </button>
      </WindowControls>
    </Header>
  );
}

export default function App() {
  return (
    <>
      <GlobalStyle />
      <Desktop>
        <DesktopLabel $top={58}>全能</DesktopLabel>
        <DesktopLabel $top={404}>新建</DesktopLabel>
        <Window>
          <LeftRail />
          <Body>
            <TopBar />
            <Columns>
              <SideMenu />
              <FileList />
            </Columns>
          </Body>
        </Window>
        <Taskbar>
          <Task $width={180} $inset={0}>
            此电脑\OPPO Reno...
          </Task>
          <Task $width={226} $inset={11} $active>
            <SquirrelBadge />
            UC网盘
          </Task>
          <Task $width={214} $inset={5}>
            <RecorderBadge />
            全能录屏助手
          </Task>
          <Tray>
            <TrayIcons />
            <InputMethod>中</InputMethod>
          </Tray>
        </Taskbar>
        <Caption $left={452} $top={112} $pad={17} $radius={18} $size={116} $line={135}>
          看小说关注阿婆主
        </Caption>
        <Caption $left={1246} $top={679} $pad={13} $radius={2} $size={88} $line={83}>
          7.2
        </Caption>
        <Caption $left={516} $top={823} $pad={13} $radius={14} $size={88} $line={100}>
          每天更新一百多本
        </Caption>
        <Pointer width="28" height="36" viewBox="606 512 84 108" aria-hidden="true">
          <path
            d="M631 580v-58c0-8 13-8 13 0v24c2-9 13-8 13 0 3-8 13-5 13 3 4-6 14-2 14 7v24c0 20-12 35-30 35-14 0-22-7-28-19l-16-24c-3-9 8-12 12-4z"
            fill="#fff"
            stroke="#26292c"
            strokeWidth="5"
          />
          <path d="M644 546v18M657 546v18M670 549v17" fill="none" stroke="#26292c" strokeWidth="5" />
        </Pointer>
      </Desktop>
    </>
  );
}
